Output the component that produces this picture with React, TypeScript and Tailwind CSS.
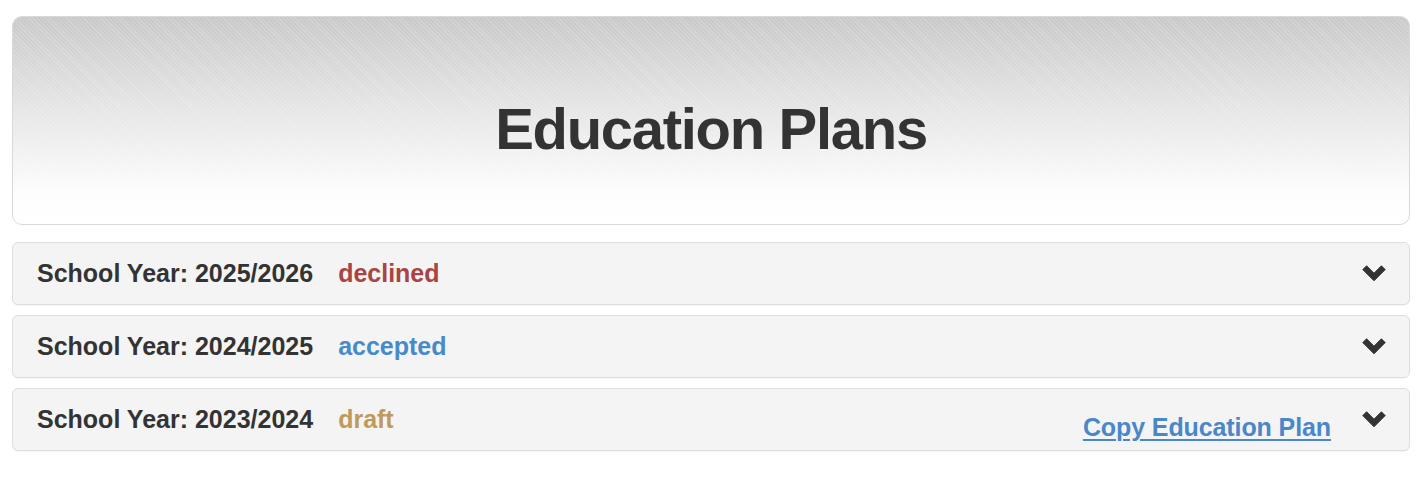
import React from 'react'

type Plan = {
  year: string
  status: 'declined' | 'accepted' | 'draft'
  canCopy?: boolean
}

const PLANS: Plan[] = [
  { year: '2025/2026', status: 'declined' },
  { year: '2024/2025', status: 'accepted' },
  { year: '2023/2024', status: 'draft', canCopy: true },
]

const STATUS_COLORS: Record<Plan['status'], string> = {
  declined: 'text-[#a94442]',
  accepted: 'text-[#478acb]',
  draft: 'text-[#bf9b5b]',
}

function ChevronDown() {
  return (
    <svg width="24" height="17" viewBox="0 0 24 17" className="shrink-0">
      <polygon
        points="0.8,4.6 4.6,0.8 12,8.2 19.4,0.8 23.2,4.6 12,15.8"
        fill="#333"
        stroke="#333"
        strokeWidth="1"
        strokeLinejoin="round"
      />
    </svg>
  )
}

function PlanRow({ plan }: { plan: Plan }) {
  return (
    <div className="flex h-[63px] items-center rounded-md border border-[#dedede] bg-[#f4f4f4] pl-[24px] pr-[23px] shadow-[0_1px_1px_rgba(0,0,0,0.04)]">
      <span className="text-[25px] font-bold text-[#333]">
        School Year: {plan.year}
      </span>
      <span className={`ml-[25px] text-[25px] font-bold ${STATUS_COLORS[plan.status]}`}>
        {plan.status}
      </span>
      <div className="flex-1" />
      {plan.canCopy && (
        <a
          href="#"
          className="mr-[31px] mt-[16px] text-[25px] font-bold tracking-[-0.1px] text-[#4a87c8] underline decoration-[2px] underline-offset-[3px]"
        >
          Copy Education Plan
        </a>
      )}
      <ChevronDown />
    </div>
  )
}

export default function App() {
  return (
    <div className="min-h-screen bg-white px-[12px] pt-[16px] font-['Liberation_Sans',Arial,sans-serif]">
      {/* Page header */}
      <div className="flex h-[209px] items-center justify-center rounded-[10px] border border-[#d9d9d9] bg-[image:repeating-linear-gradient(45deg,rgba(255,255,255,0.18)_0px,rgba(255,255,255,0.18)_1px,transparent_1px,transparent_3px),linear-gradient(to_bottom,#c9c9c9_0%,#e6e6e6_45%,#fdfdfd_85%,#ffffff_100%)] pt-[17px]">
        <h1 className="text-[58px] font-bold leading-none tracking-[-1.3px] text-[#333]">
          Education Plans
        </h1>
      </div>

      {/* School year accordion */}
      <div className="mt-[17px] flex flex-col gap-[10px]">
        {PLANS.map(plan => (
          <PlanRow key={plan.year} plan={plan} />
        ))}
      </div>
    </div>
  )
}
